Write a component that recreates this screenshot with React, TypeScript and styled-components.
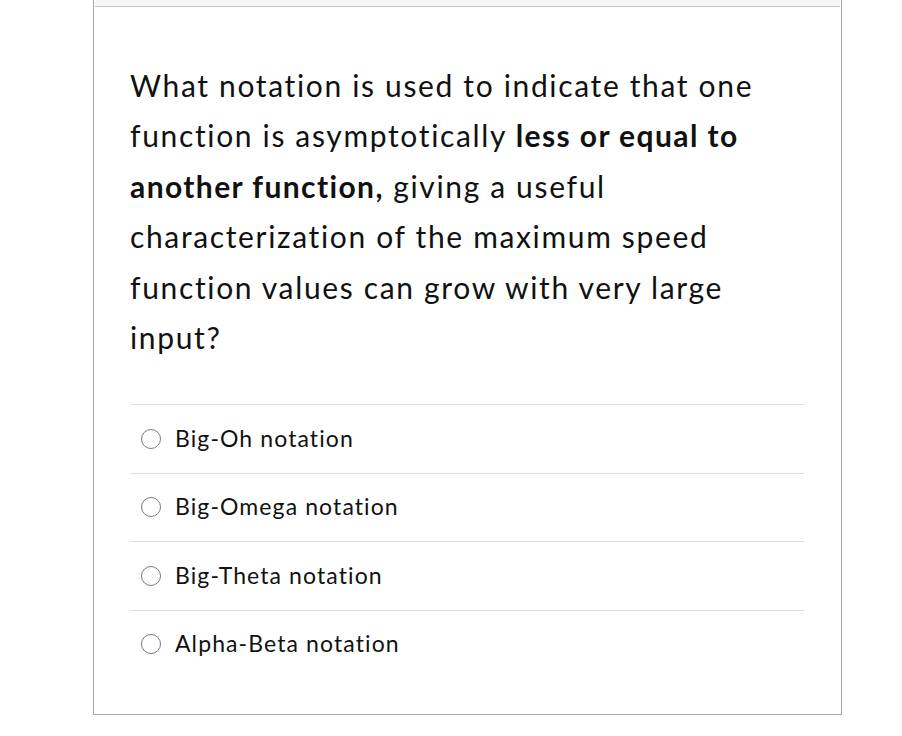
import React from 'react';
import styled, { createGlobalStyle } from 'styled-components';

const GlobalStyle = createGlobalStyle`
  html, body {
    margin: 0;
    padding: 0;
    background: #fff;
  }
  body {
    font-family: Lato, "Open Sans", "Liberation Sans", sans-serif;
    color: #1a1a1a;
  }
`;

const Page = styled.div`
  padding-left: 93px;
  padding-bottom: 20px;
`;

const Card = styled.section`
  width: 747px;
  border: 1px solid #a9a9a9;
  border-top: none;
  background: #fff;
`;

const HeaderStrip = styled.div`
  height: 6px;
  background: #f5f5f5;
  border-bottom: 1px solid #c4c4c4;
  margin: 0 1px;
`;

const Body = styled.div`
  padding: 53px 37px 36px 36px;
`;

const Question = styled.p`
  margin: 0 0 42px;
  font-size: 30px;
  letter-spacing: 1.65px;
  line-height: 50.4px;
  color: #111;

  strong {
    font-weight: 700;
    letter-spacing: 1.4px;
  }
`;

const Options = styled.ul`
  list-style: none;
  margin: 0;
  padding: 0;
`;

const Option = styled.li`
  display: flex;
  align-items: center;
  gap: 14px;
  height: 68.5px;
  border-top: 1px solid #dedede;
  padding: 0 0 3px 11px;
  box-sizing: border-box;
  font-size: 23px;
  letter-spacing: 1.1px;
  color: #111;
`;

const Radio = styled.span`
  width: 20px;
  height: 20px;
  margin-top: 2px;
  border-radius: 50%;
  border: 1.5px solid #7a7a7a;
  box-sizing: border-box;
  flex-shrink: 0;
`;

const options = ['Big-Oh notation', 'Big-Omega notation', 'Big-Theta notation', 'Alpha-Beta notation'];

const App: React.FC = () => (
  <Page>
    <GlobalStyle />
    <Card>
      <HeaderStrip />
      <Body>
        <Question>
          What notation is used to indicate that one function is asymptotically{' '}
          <strong>less or equal to another function,</strong> giving a useful characterization of the
          maximum speed function values can grow with very large input?
        </Question>
        <Options>
          {options.map((label) => (
            <Option key={label}>
              <Radio />
              <span>{label}</span>
            </Option>
          ))}
        </Options>
      </Body>
    </Card>
  </Page>
);

export default App;
